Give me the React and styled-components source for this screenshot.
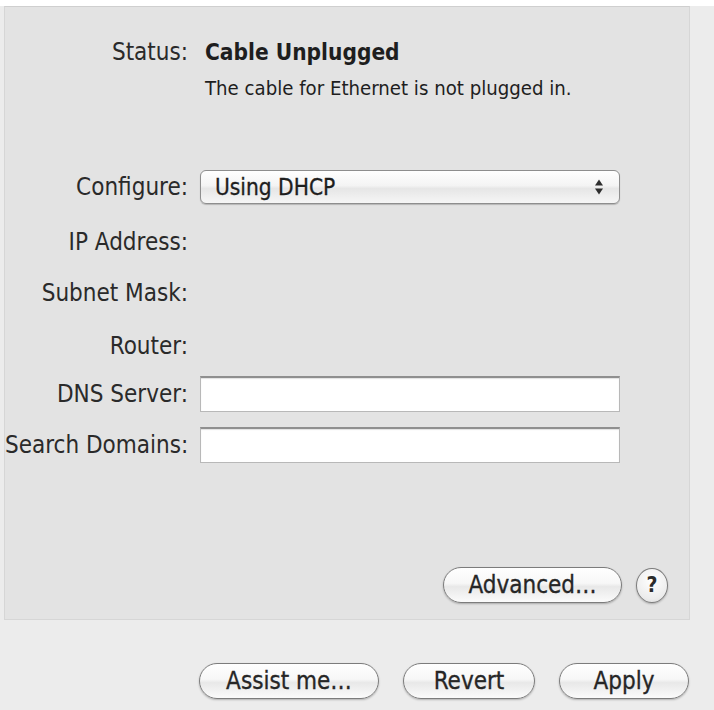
import React from 'react';
import styled, { createGlobalStyle } from 'styled-components';

const FONT = `"DejaVu Sans Condensed", "DejaVu Sans", "Liberation Sans", sans-serif`;

const GlobalStyle = createGlobalStyle`
  html, body {
    margin: 0;
    padding: 0;
    background: #ececec;
  }
  body {
    font-family: ${FONT};
    color: #222;
  }
`;

const Window = styled.div`
  width: 714px;
  height: 710px;
  background: #ececec;
  border-top: 6px solid #fff;
  box-sizing: border-box;
  overflow: hidden;
`;

const Panel = styled.div`
  margin-left: 4px;
  width: 686px;
  height: 614px;
  box-sizing: border-box;
  background: #e3e3e3;
  border: 1px solid #d6d6d6;
  border-top-color: #cfcfcf;
  padding: 33px 21px 0 0;
  display: flex;
  flex-direction: column;
`;

const Row = styled.div`
  display: flex;
  align-items: center;
  height: ${p => p.h || 34}px;
  margin-top: ${p => p.mt || 0}px;
`;

const Label = styled.div`
  width: 183px;
  flex: none;
  text-align: right;
  font-size: 24px;
  color: #2a2a2a;
  white-space: nowrap;
`;

const Value = styled.div`
  margin-left: 17px;
  font-size: ${p => p.size || 22}px;
  font-weight: ${p => (p.bold ? 700 : 400)};
  color: #1e1e1e;
  white-space: nowrap;
`;

const Select = styled.div`
  margin-left: 12px;
  width: 420px;
  height: 34px;
  box-sizing: border-box;
  border: 1px solid #8e8e8e;
  border-radius: 6px;
  background: linear-gradient(#ffffff, #f4f4f4 45%, #e6e6e6 55%, #f6f6f6);
  box-shadow: 0 1px 1px rgba(0, 0, 0, 0.2);
  display: flex;
  align-items: center;
  padding-left: 14px;
  font-size: 22.5px;
  color: #1e1e1e;
  -webkit-text-stroke: 0.3px #1e1e1e;
`;

const Arrows = styled.div`
  margin-left: auto;
  width: 40px;
  height: 100%;
  display: flex;
  align-items: center;
  justify-content: center;
`;

const TextField = styled.div`
  margin-left: 12px;
  width: 420px;
  height: 36px;
  box-sizing: border-box;
  background: #fff;
  border: 1px solid #b8b8b8;
  border-top: 2px solid #8f8f8f;
  box-shadow: inset 0 1px 1px rgba(0, 0, 0, 0.12);
`;

const ButtonRow = styled.div`
  display: flex;
  justify-content: flex-end;
  align-items: center;
  gap: ${p => p.gap || 14}px;
  margin-top: ${p => p.mt || 0}px;
`;

const PillButton = styled.button`
  width: ${p => p.w}px;
  height: 36px;
  box-sizing: border-box;
  border: 1.5px solid #7c7c7c;
  border-radius: 18px;
  background: linear-gradient(#ffffff, #f7f7f7 45%, #e8e8e8 55%, #fbfbfb);
  box-shadow: 0 1px 2px rgba(0, 0, 0, 0.25);
  font-family: ${FONT};
  font-size: 24px;
  line-height: 1;
  color: #262626;
  -webkit-text-stroke: 0.3px #262626;
  padding: 0;
  cursor: pointer;
`;

const HelpButton = styled.button`
  width: 32px;
  height: 35px;
  box-sizing: border-box;
  border-radius: 50%;
  border: 1.5px solid #7c7c7c;
  background: radial-gradient(circle at 50% 35%, #ffffff, #ececec 70%, #d8d8d8);
  box-shadow: 0 1px 2px rgba(0, 0, 0, 0.25);
  font-family: ${FONT};
  font-size: 21px;
  font-weight: 700;
  color: #2b2b2b;
  padding: 0;
`;

const Footer = styled.div`
  display: flex;
  justify-content: flex-end;
  gap: ${p => p.gap}px;
  padding-right: 25px;
  margin-top: 43px;
`;

const UpDown = () => (
  <svg width="10" height="18" viewBox="0 0 10 18">
    <path d="M5 1.5 L9 7.5 L1 7.5 Z" fill="#2e2e2e" />
    <path d="M5 16.5 L9 10.5 L1 10.5 Z" fill="#2e2e2e" />
  </svg>
);

export default function App() {
  return (
    <>
      <GlobalStyle />
      <Window>
        <Panel>
          <Row h={24}>
            <Label>Status:</Label>
            <Value bold size={22.5}>Cable Unplugged</Value>
          </Row>
          <Row h={22} mt={13}>
            <Label />
            <Value size={20.2}>The cable for Ethernet is not plugged in.</Value>
          </Row>
          <Row mt={71}>
            <Label>Configure:</Label>
            <Select>
              Using DHCP
              <Arrows>
                <UpDown />
              </Arrows>
            </Select>
          </Row>
          <Row mt={21}>
            <Label>IP Address:</Label>
          </Row>
          <Row mt={17}>
            <Label>Subnet Mask:</Label>
          </Row>
          <Row mt={19}>
            <Label>Router:</Label>
          </Row>
          <Row h={36} mt={13}>
            <Label>DNS Server:</Label>
            <TextField />
          </Row>
          <Row h={36} mt={15}>
            <Label>Search Domains:</Label>
            <TextField />
          </Row>
          <ButtonRow mt={104}>
            <PillButton w={179}>Advanced…</PillButton>
            <HelpButton>?</HelpButton>
          </ButtonRow>
        </Panel>
        <Footer gap={24}>
          <PillButton w={180}>Assist me…</PillButton>
          <PillButton w={132}>Revert</PillButton>
          <PillButton w={130}>Apply</PillButton>
        </Footer>
      </Window>
    </>
  );
}
